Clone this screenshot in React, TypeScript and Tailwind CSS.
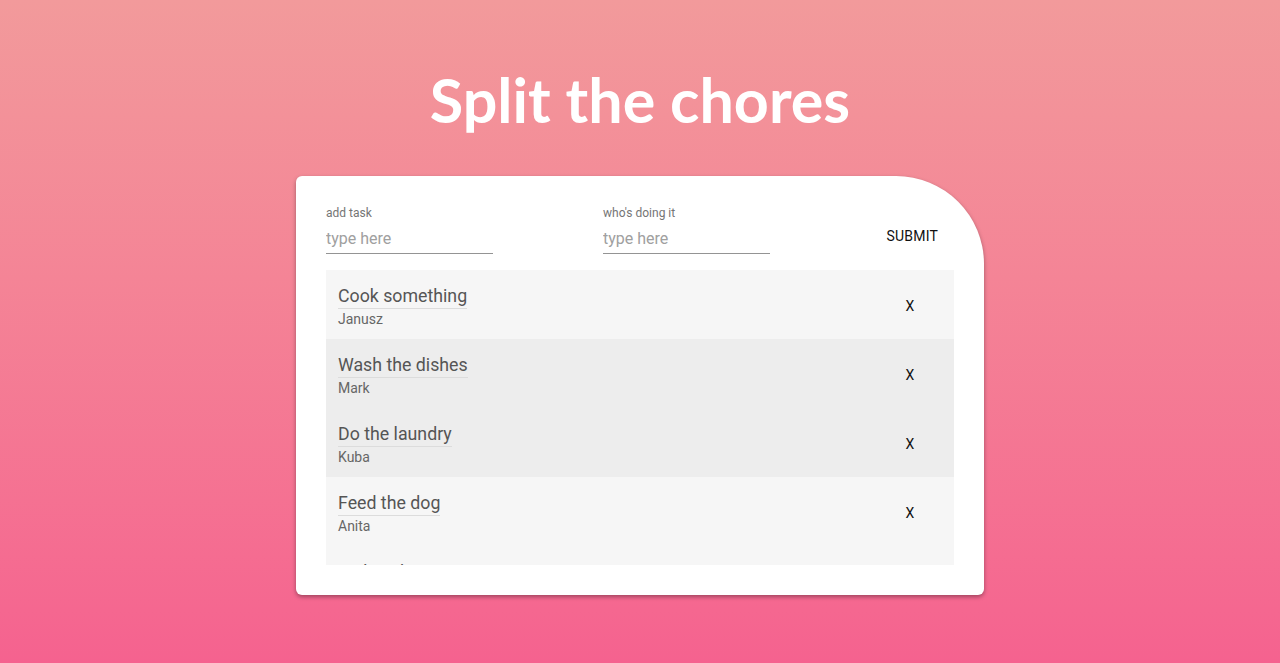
import React from 'react';

const chores = [
  { task: 'Cook something', who: 'Janusz', bg: 'bg-[#f6f6f6]' },
  { task: 'Wash the dishes', who: 'Mark', bg: 'bg-[#ededed]' },
  { task: 'Do the laundry', who: 'Kuba', bg: 'bg-[#ededed]' },
  { task: 'Feed the dog', who: 'Anita', bg: 'bg-[#f6f6f6]' },
  { task: 'make a bow', who: 'Ola', bg: 'bg-[#f6f6f6]' },
];

const Field = ({ label }: { label: string }) => (
  <div className="flex flex-col w-[167px]">
    <label className="text-[12px] leading-[16px] text-[#757575]">{label}</label>
    <input
      placeholder="type here"
      className="mt-[3px] h-[30px] w-full border-b border-[#949494] bg-transparent text-[16px] text-[#333] outline-none placeholder:text-[#a0a0a0]"
    />
  </div>
);

const App = () => (
  <div
    className="h-[663px] w-full bg-linear-to-b from-[#f29a9b] to-[#f5628f] flex flex-col items-center"
    style={{ fontFamily: 'Roboto, "Liberation Sans", sans-serif' }}
  >
    <h1
      className="pt-[60px] h-[176px] text-[61px] leading-[80px] font-bold text-white"
      style={{ fontFamily: 'Lato, "Open Sans", sans-serif' }}
    >
      Split the chores
    </h1>

    <div className="w-[688px] h-[419px] bg-white rounded-[6px] rounded-tr-[88px] shadow-[0_2px_4px_rgba(0,0,0,0.35)] px-[30px] pt-[29px] pb-[30px] flex flex-col">
      <div className="flex items-end">
        <Field label="add task" />
        <div className="ml-[110px]">
          <Field label="who's doing it" />
        </div>
        <button className="ml-auto h-[36px] min-w-[64px] px-4 text-[14px] uppercase text-[#111] tracking-[0.2px]">
          Submit
        </button>
      </div>

      <ul className="mt-[16px] flex-1 overflow-hidden">
        {chores.map((c) => (
          <li key={c.task} className={`${c.bg} h-[69px] flex items-center pl-[12px] pt-[4px]`}>
            <div className="flex-1 flex flex-col items-start">
              <span className="text-[17.75px] leading-[24px] text-[#555] border-b border-[#dcdcdc]">
                {c.task}
              </span>
              <span className="text-[14px] leading-[20px] text-[#666]">{c.who}</span>
            </div>
            <button className="w-16 mr-3 text-[14px] uppercase text-[#111]">x</button>
          </li>
        ))}
      </ul>
    </div>
  </div>
);

export default App;
